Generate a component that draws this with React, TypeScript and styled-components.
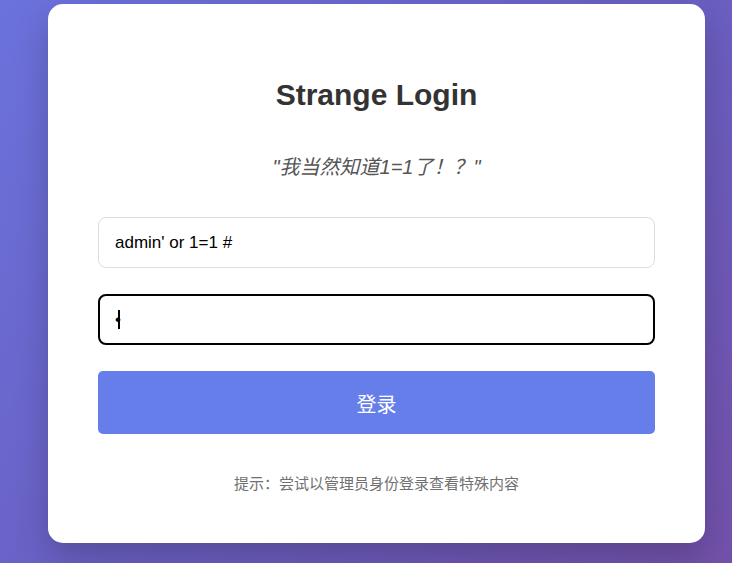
import React from "react";
import styled, { createGlobalStyle } from "styled-components";

const GlobalStyle = createGlobalStyle`
  html, body {
    margin: 0;
    padding: 0;
  }
  body {
    min-height: 563px;
    background: linear-gradient(135deg, #6b72dc 0%, #6a5fc2 55%, #7351aa 100%);
    font-family: "Liberation Sans", Arial, "Noto Sans CJK SC", sans-serif;
  }
  * {
    box-sizing: border-box;
  }
`;

const Page = styled.div`
  display: flex;
  align-items: flex-start;
  padding: 4px 0 0 48px;
  min-height: 563px;
`;

const Card = styled.div`
  width: 657px;
  height: 539px;
  background: #ffffff;
  border-radius: 15px;
  box-shadow: 0 15px 35px rgba(0, 0, 0, 0.2);
  padding: 0 50px;
  display: flex;
  flex-direction: column;
`;

const Title = styled.h2`
  margin: 75px 0 0;
  font-size: 30px;
  line-height: 32px;
  font-weight: bold;
  color: #333333;
  text-align: center;
`;

const Quote = styled.p`
  margin: 45px 0 0;
  font-size: 20px;
  line-height: 22px;
  font-style: italic;
  color: #555555;
  text-align: center;
`;

const Form = styled.form`
  display: flex;
  flex-direction: column;
  gap: 26px;
  margin-top: 39px;
`;

const FieldWrap = styled.div`
  position: relative;
`;

const Input = styled.input<{ $focused?: boolean }>`
  display: block;
  width: 100%;
  height: 51px;
  padding: 0 ${(p) => (p.$focused ? 15 : 16)}px;
  border: ${(p) => (p.$focused ? "2px solid #000000" : "1px solid #dddddd")};
  border-radius: 8px;
  font-family: "Liberation Sans", Arial, sans-serif;
  font-size: 17px;
  color: #000000;
  background: #ffffff;
  outline: none;
`;

const Caret = styled.span`
  position: absolute;
  left: 20px;
  top: 16px;
  width: 2px;
  height: 19px;
  background: #000000;
`;

const Button = styled.button`
  height: 63px;
  padding-top: 2px;
  border: none;
  border-radius: 5px;
  background: #667eea;
  color: #ffffff;
  font-size: 20px;
  font-family: "Liberation Sans", Arial, "Noto Sans CJK SC", sans-serif;
  cursor: pointer;
`;

const Hint = styled.p`
  margin: 42px 0 0;
  font-size: 15px;
  line-height: 16px;
  color: #707070;
  text-align: center;
`;

export default function App() {
  return (
    <>
      <GlobalStyle />
      <Page>
        <Card>
          <Title>Strange Login</Title>
          <Quote>"我当然知道1=1了！？"</Quote>
          <Form onSubmit={(e) => e.preventDefault()}>
            <Input type="text" defaultValue="admin' or 1=1 #" readOnly />
            <FieldWrap>
              <Input type="password" defaultValue="1" readOnly $focused />
              <Caret />
            </FieldWrap>
            <Button type="submit">登录</Button>
          </Form>
          <Hint>提示：尝试以管理员身份登录查看特殊内容</Hint>
        </Card>
      </Page>
    </>
  );
}
